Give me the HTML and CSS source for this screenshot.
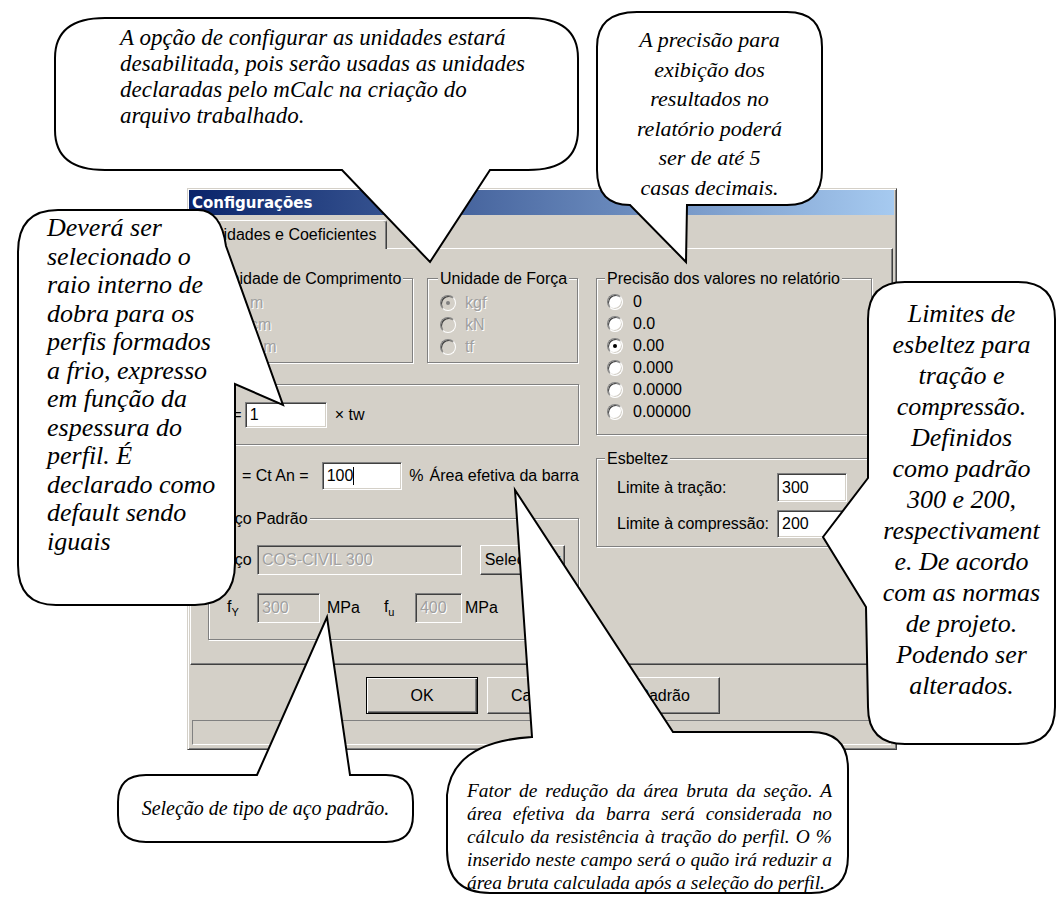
FILE: index.html
```html
<!DOCTYPE html>
<html>
	<head>
		<meta charset="UTF-8">
		<title>Configurações</title>
		<link rel="stylesheet" href="styles.css">
	</head>
	<body>
		<div id="page">
			<div id="dialog">
				<div id="titlebar">Configurações</div>
				<div id="tabs"><div class="tab">Unidades e Coeficientes</div></div>
				<div id="panel">
					<div id="colleft">
						<div id="units">
							<div class="group" id="gcomp">
								<span class="legend">Unidade de Comprimento</span>
								<div class="radio off on"><i></i>m</div>
								<div class="radio off"><i></i>cm</div>
								<div class="radio off"><i></i>mm</div>
							</div>
							<div class="group" id="gforca">
								<span class="legend">Unidade de Força</span>
								<div class="radio off on"><i></i>kgf</div>
								<div class="radio off"><i></i>kN</div>
								<div class="radio off"><i></i>tf</div>
							</div>
						</div>
						<div class="group" id="graio">
							<span class="legend">ri</span>
							<div class="line">
								<span>ri =</span>
								<span class="input" id="inraio">1</span>
								<span class="after">× tw</span>
							</div>
						</div>
						<div class="line" id="rowct">
							<span>= Ct An =</span>
							<span class="input" id="inct">100<b class="caret"></b></span>
							<span class="pct">%</span>
							<span class="pctlabel">Área efetiva da barra</span>
						</div>
						<div class="group" id="gaco">
							<span class="legend">Aço Padrão</span>
							<div class="line">
								<span class="sym">Aço</span>
								<span class="input off" id="inaco">COS-CIVIL 300</span>
								<span class="btn" id="btnsel">Selecionar</span>
							</div>
							<div class="line" id="rowfy">
								<span class="sym"><em>f<sub>Y</sub></em></span>
								<span class="input off" id="infy">300</span>
								<span class="unit">MPa</span>
								<span class="sym" id="symfu"><em>f<sub>u</sub></em></span>
								<span class="input off" id="infu">400</span>
								<span class="unit" id="unitfu">MPa</span>
							</div>
						</div>
					</div>
					<div id="colright">
						<div class="group" id="gprec">
							<span class="legend">Precisão dos valores no relatório</span>
							<div class="radio"><i></i>0</div>
							<div class="radio"><i></i>0.0</div>
							<div class="radio on"><i></i>0.00</div>
							<div class="radio"><i></i>0.000</div>
							<div class="radio"><i></i>0.0000</div>
							<div class="radio"><i></i>0.00000</div>
						</div>
						<div class="group" id="gesb">
							<span class="legend">Esbeltez</span>
							<div class="line esbrow">
								<span>Limite à tração:</span>
								<span class="input">300</span>
							</div>
							<div class="line esbrow" id="rowcomp">
								<span>Limite à compressão:</span>
								<span class="input">200</span>
							</div>
						</div>
					</div>
				</div>
				<div id="buttons">
					<span class="btn default">OK</span>
					<span class="btn">Cancelar</span>
					<span class="btn">Padrão</span>
				</div>
				<div id="statusbar"></div>
			</div>

			<svg id="callouts" width="1057" height="908" viewBox="0 0 1057 908">
				<path d="M105,18 L528,18 Q578,18 578,58 L578,130 Q578,170 528,170 L490,170 L430,262 L342,170 L105,170 Q55,170 55,130 L55,58 Q55,18 105,18 Z"/>
				<path d="M637,12 L787,12 Q822,12 822,47 L822,170 Q822,205 787,205 L687,205 L686,262 L630,205 Q597,205 597,170 L597,47 Q597,12 637,12 Z"/>
				<path d="M58,210 L198,210 Q221,210 226,246 L283,405 L235,384 L235,563 Q235,605 195,605 L56,605 Q18,605 18,565 L18,252 Q18,210 58,210 Z"/>
				<path d="M905,282 L1018,282 Q1055,282 1055,319 L1055,707 Q1055,744 1018,744 L905,744 Q868,744 868,707 L866,607 L823,537 L868,478 L868,319 Q868,282 905,282 Z"/>
				<path d="M532,737 L515,490 L673,732 L811,732 Q848,732 848,769 L848,856 Q848,893 811,893 L490,893 Q447,893 447,850 L447,795 Q452,742 532,737 Z"/>
				<path d="M146,775 L257,775 L327,617 L350,775 L386,775 Q413,775 413,802 L413,815 Q413,842 386,842 L146,842 Q118,842 118,815 L118,802 Q118,775 146,775 Z"/>
			</svg>

			<div class="note" id="notea">A opção de configurar as unidades estará<br>desabilitada, pois serão usadas as unidades<br>declaradas pelo mCalc na criação do<br>arquivo trabalhado.</div>
			<div class="note" id="noteb">A precisão para<br>exibição dos<br>resultados no<br>relatório poderá<br>ser de até 5<br>casas decimais.</div>
			<div class="note" id="notec">Deverá ser<br>selecionado o<br>raio interno de<br>dobra para os<br>perfis formados<br>a frio, expresso<br>em função da<br>espessura do<br>perfil. É<br>declarado como<br>default sendo<br>iguais</div>
			<div class="note" id="noted">Limites de<br>esbeltez para<br>tração e<br>compressão.<br>Definidos<br>como padrão<br>300 e 200,<br>respectivament<br>e. De acordo<br>com as normas<br>de projeto.<br>Podendo ser<br>alterados.</div>
			<div class="note" id="notee">
				<span>Fator de redução da área bruta da seção. A</span>
				<span>área efetiva da barra será considerada no</span>
				<span>cálculo da resistência à tração do perfil. O %</span>
				<span>inserido neste campo será o quão irá reduzir a</span>
				<span class="last">área bruta calculada após a seleção do perfil.</span>
			</div>
			<div class="note" id="notef">Seleção de tipo de aço padrão.</div>
		</div>
	</body>
</html>
```

FILE: styles.css
```css
*{
	box-sizing: border-box;
}
body{
	margin: 0;
	background: #fff;
	font-family: "Liberation Sans", Arial, sans-serif;
	font-size: 16px;
	color: #000;
}
#page{
	position: relative;
	width: 1057px;
	height: 908px;
	padding: 188px 0 0 187px;
	overflow: hidden;
}

/* janela */
#dialog{
	width: 710px;
	height: 562px;
	background: #d4d0c8;
	border: 1px solid;
	border-color: #d4d0c8 #404040 #404040 #d4d0c8;
	box-shadow: inset 1px 1px #fff, inset -1px -1px #808080;
	padding: 1px 2px 2px 1px;
	display: flex;
	flex-direction: column;
}
#titlebar{
	height: 25px;
	flex: none;
	background: linear-gradient(to right, #0a246a, #a6caf0);
	color: #fff;
	font: bold 15px "DejaVu Sans", sans-serif;
	display: flex;
	align-items: center;
	padding-left: 3px;
}
#tabs{
	display: flex;
	margin-top: 5px;
	padding-left: 1px;
	flex: none;
}
.tab{
	height: 29px;
	line-height: 27px;
	padding: 0 10px 0 12px;
	background: #d4d0c8;
	border: 1px solid;
	border-color: #fff #404040 transparent #fff;
	border-bottom: none;
	border-radius: 3px 3px 0 0;
	box-shadow: inset -1px 0 #808080;
	margin-bottom: -1px;
	position: relative;
}
#panel{
	height: 417px;
	flex: none;
	margin: 0 1px 0 1px;
	border: 1px solid;
	border-color: #fff #404040 #404040 #fff;
	box-shadow: inset -1px -1px #808080;
	padding: 29px 0 0 17px;
	display: flex;
	gap: 17px;
}
#colleft{
	width: 371px;
	display: flex;
	flex-direction: column;
}
#colright{
	width: 276px;
	display: flex;
	flex-direction: column;
}

/* caixas de grupo */
.group{
	position: relative;
	border: 1px solid #808080;
	box-shadow: inset 1px 1px #fff, 1px 1px #fff;
}
.legend{
	position: absolute;
	top: -10px;
	left: 8px;
	padding: 0 2px;
	line-height: 19px;
	background: #d4d0c8;
	white-space: nowrap;
}
#units{
	display: flex;
	gap: 14px;
}
#gcomp{
	width: 205px;
	height: 85px;
	padding: 13px 0 0 16px;
}
#gforca{
	width: 151px;
	height: 85px;
	padding: 13px 0 0 12px;
}
#gforca .legend{
	left: 10px;
}
#graio{
	height: 61px;
	margin-top: 21px;
	padding: 17px 0 0 10px;
}
#gaco{
	height: 122px;
	margin-top: 28px;
	padding: 26px 0 0 15px;
}
#gaco .legend{
	left: 13px;
}
#gprec{
	height: 157px;
	padding: 12px 0 0 10px;
}
#gesb{
	height: 89px;
	margin-top: 23px;
	padding: 14px 24px 0 20px;
}

/* radios */
.radio{
	display: flex;
	align-items: center;
	height: 22px;
	white-space: nowrap;
}
.radio i{
	flex: none;
	position: relative;
	width: 16px;
	height: 16px;
	margin-right: 9px;
	border-radius: 50%;
	background: #fff;
	border: 1px solid;
	border-color: #808080 #fff #fff #808080;
	box-shadow: inset 1px 1px #404040, inset -1px -1px #d4d0c8;
}
#gprec .radio i{
	margin-right: 10px;
}
.radio.on i::after{
	content: "";
	position: absolute;
	left: 5px;
	top: 5px;
	width: 4px;
	height: 4px;
	border-radius: 50%;
	background: #000;
}
.radio.off{
	color: #a0a0a0;
	text-shadow: 1px 1px #fff;
}
.radio.off i{
	background: #d4d0c8;
}
.radio.off.on i::after{
	background: #808080;
}

/* linhas e campos */
.line{
	display: flex;
	align-items: center;
	white-space: nowrap;
}
.input{
	display: flex;
	align-items: center;
	height: 26px;
	padding-left: 4px;
	background: #fff;
	border: 1px solid;
	border-color: #808080 #fff #fff #808080;
	box-shadow: inset 1px 1px #404040, inset -1px -1px #d4d0c8;
}
.input.off{
	background: #d4d0c8;
	color: #a0a0a0;
	text-shadow: 1px 1px #fff;
}
#inraio{
	width: 82px;
	margin-left: 3px;
}
.after{
	margin-left: 8px;
}
#rowct{
	height: 28px;
	margin-top: 17px;
	padding-left: 34px;
}
#inct{
	width: 82px;
	height: 28px;
	margin-left: 13px;
}
.caret{
	display: inline-block;
	width: 1px;
	height: 18px;
	background: #000;
}
.pct{
	margin-left: 7px;
}
.pctlabel{
	margin-left: 6px;
}
.sym{
	width: 33px;
	flex: none;
}
.sym em{
	font-style: normal;
	padding-left: 3px;
}
.sym sub{
	font-size: 11px;
}
#inaco{
	width: 205px;
	height: 30px;
}
#btnsel{
	width: 85px;
	height: 30px;
	margin-left: 18px;
}
#rowfy{
	margin-top: 18px;
}
#infy{
	width: 63px;
	height: 30px;
}
.unit{
	margin-left: 7px;
}
#symfu{
	margin-left: 24px;
	width: 31px;
}
#symfu em{
	padding-left: 0;
}
#infu{
	width: 47px;
	height: 30px;
}
#unitfu{
	margin-left: 3px;
}
.esbrow{
	justify-content: space-between;
	height: 29px;
}
.esbrow .input{
	width: 70px;
	height: 29px;
}
#rowcomp{
	margin-top: 8px;
	height: 28px;
}
#rowcomp .input{
	height: 28px;
}

/* botoes */
.btn{
	display: flex;
	align-items: center;
	justify-content: center;
	width: 112px;
	height: 37px;
	background: #d4d0c8;
	border: 1px solid;
	border-color: #fff #404040 #404040 #fff;
	box-shadow: inset -1px -1px #808080;
}
.btn.default{
	border: 1px solid #000;
	box-shadow: inset 1px 1px #fff, inset -1px -1px #404040, inset -2px -2px #808080;
}
#buttons{
	display: flex;
	gap: 9px;
	margin-top: 12px;
	padding-left: 177px;
	flex: none;
}
#statusbar{
	height: 25px;
	margin: 6px 3px 0 3px;
	border: 1px solid;
	border-color: #808080 #fff #fff #808080;
	flex: none;
}

/* baloes */
#callouts{
	position: absolute;
	left: 0;
	top: 0;
	z-index: 2;
}
#callouts path{
	fill: #fff;
	stroke: #000;
	stroke-width: 2;
}
.note{
	position: absolute;
	z-index: 3;
	font-family: "Liberation Serif", "Times New Roman", serif;
	font-style: italic;
	white-space: nowrap;
	color: #000;
}
#notea{
	left: 120px;
	top: 25px;
	font-size: 23px;
	line-height: 26px;
}
#noteb{
	left: 597px;
	top: 25px;
	width: 225px;
	text-align: center;
	font-size: 22px;
	line-height: 29.5px;
}
#notec{
	left: 47px;
	top: 214px;
	font-size: 26px;
	line-height: 28.5px;
}
#noted{
	left: 868px;
	top: 298px;
	width: 187px;
	text-align: center;
	font-size: 26px;
	line-height: 31px;
}
#notee{
	left: 467px;
	top: 779px;
	width: 365px;
	font-size: 19.4px;
	line-height: 23px;
}
#notee span{
	display: block;
	text-align: justify;
	text-align-last: justify;
}
#notee span.last{
	text-align-last: left;
}
#notef{
	left: 118px;
	top: 793px;
	width: 295px;
	text-align: center;
	font-size: 20px;
	line-height: 30px;
}
```
